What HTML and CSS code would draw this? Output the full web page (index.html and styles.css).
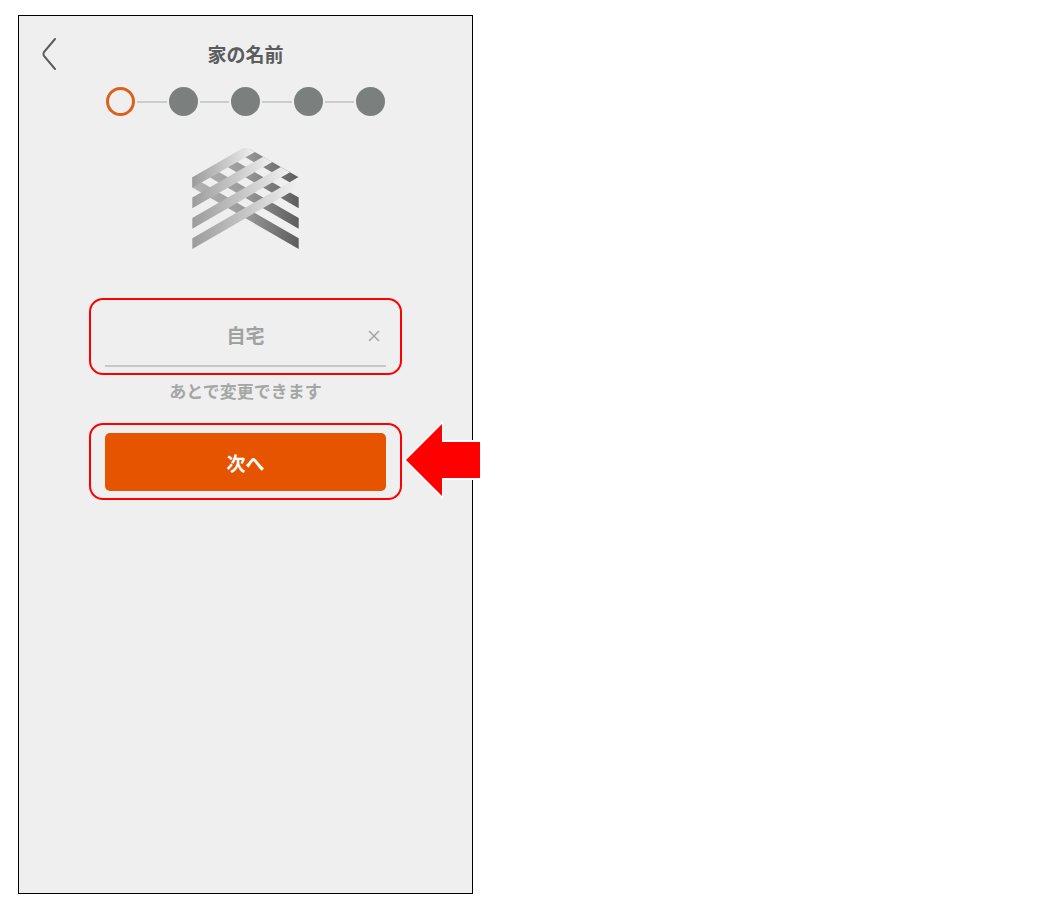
FILE: index.html
```html
<!DOCTYPE html>
<html lang="ja">
  <head>
    <meta charset="UTF-8" />
    <meta name="viewport" content="width=device-width, initial-scale=1.0" />
    <title>家の名前</title>
    <link rel="stylesheet" href="styles.css">
  </head>
  <body>
    <main class="phone">
      <header class="header">
        <button class="back" type="button" aria-label="戻る">
          <svg width="16" height="34" viewBox="0 0 16 34">
            <path d="M13 2 L2 15 Q1 17 2 19 L13 32" fill="none" stroke="#5a5c5d" stroke-width="2" stroke-linecap="round" />
          </svg>
        </button>
        <h1>家の名前</h1>
      </header>

      <ol class="steps">
        <li class="step current"></li>
        <li class="step"></li>
        <li class="step"></li>
        <li class="step"></li>
        <li class="step"></li>
      </ol>

      <svg class="logo" viewBox="0 0 320 304" aria-hidden="true">
        <defs>
          <linearGradient id="dark" gradientUnits="userSpaceOnUse" x1="0" y1="0" x2="320" y2="0">
            <stop offset="0" stop-color="#b4b4b4" />
            <stop offset="0.5" stop-color="#999999" />
            <stop offset="1" stop-color="#5c5c5c" />
          </linearGradient>
          <linearGradient id="light">
            <stop offset="0" stop-color="#9c9c9c" />
            <stop offset="0.55" stop-color="#cacaca" />
            <stop offset="1" stop-color="#f1f1f1" />
          </linearGradient>
        </defs>
        <!-- bands going down to the right -->
        <g fill="url(#dark)">
          <path d="M146 20 L174 4 L320 88 L294 104 Z" />
          <path d="M93 50 L121 34 L320 149 L320 181 Z" />
          <path d="M40 81 L67 65 L320 211 L320 243 Z" />
          <path d="M0 119 L0 87 L320 272 L320 304 Z" />
        </g>
        <!-- bands going up to the right, on top -->
        <g fill="url(#light)">
          <path d="M0 88 L160 -4 L188 12 L0 120 Z" />
          <path d="M0 149 L213 26 L241 42 L0 181 Z" />
          <path d="M0 211 L266 57 L294 73 L0 243 Z" />
          <path d="M0 272 L320 87 L320 119 L0 304 Z" />
        </g>
      </svg>

      <form class="name-form">
        <div class="highlight">
          <div class="field">
            <input type="text" name="home-name" value="自宅" aria-label="家の名前" />
            <button class="clear" type="button" aria-label="消去">
              <svg width="12" height="12" viewBox="0 0 12 12">
                <path d="M1 1 L11 11 M11 1 L1 11" stroke="#a5a6a6" stroke-width="1.6" />
              </svg>
            </button>
          </div>
        </div>
        <p class="note">あとで変更できます</p>
        <div class="highlight">
          <button class="next" type="submit">次へ</button>
          <svg class="arrow" width="78" height="78" viewBox="0 0 78 78" aria-hidden="true">
            <path d="M77 18 L40 18 L40 -1 L1 38 L40 77 L40 58 L77 58 Z" fill="#fff" />
            <path d="M77 20 L39 20 L39 2 L3 38 L39 74 L39 56 L77 56 Z" fill="#f00" />
          </svg>
        </div>
      </form>
    </main>
  </body>
</html>
```

FILE: styles.css
```css
*,
*::before,
*::after {
  box-sizing: border-box;
}

body {
  margin: 0;
  padding: 15px 18px 12px;
  background-color: #fff;
  font-family: "Noto Sans CJK JP", sans-serif;
  font-weight: bold;
}

button {
  border: none;
  background: none;
  padding: 0;
  font: inherit;
  cursor: pointer;
}

svg {
  display: block;
}

.phone {
  display: flex;
  flex-direction: column;
  align-items: center;
  width: 100%;
  max-width: 455px;
  aspect-ratio: 455 / 879;
  border: 1px solid #000;
  background-color: #efefef;
}

.header {
  display: grid;
  grid-template-columns: 40px 1fr 40px;
  align-items: center;
  width: 100%;
  padding: 20px 23px 0;
}

.header h1 {
  margin: 0;
  font-size: 19px;
  line-height: 36px;
  text-align: center;
  color: #5a5c5d;
}

.steps {
  display: flex;
  justify-content: space-between;
  width: 279px;
  margin: 15px 0 0;
  padding: 0;
  list-style: none;
}

.step {
  display: flex;
  align-items: center;
}

.step::before {
  content: '';
  width: 29px;
  height: 29px;
  border-radius: 50%;
  background-color: #7b7f7e;
}

.step:not(:last-child) {
  flex: 1;
}

/* line to the next step */
.step:not(:last-child)::after {
  content: '';
  flex: 1;
  height: 2px;
  margin: 0 2px;
  background-color: #cccccc;
}

.step.current::before {
  border: 3px solid #dc601c;
  background-color: transparent;
}

.logo {
  width: 107px;
  height: 101px;
  margin-top: 32px;
}

.name-form {
  width: 313px;
  margin-top: 49px;
}

.highlight {
  position: relative;
  height: 77px;
  padding: 8px 14px;
  border: 2px solid #f00;
  border-radius: 14px;
}

.field {
  position: relative;
}

.field input {
  width: 100%;
  height: 59px;
  border: none;
  border-bottom: 2px solid #c8c8c8;
  background: none;
  padding: 0 32px 4px;
  font: inherit;
  font-size: 19px;
  text-align: center;
  color: #a0a1a1;
  outline: none;
}

.clear {
  position: absolute;
  top: 22px;
  right: 6px;
}

.note {
  margin: 0;
  font-size: 17px;
  line-height: 32px;
  padding-bottom: 16px;
  text-align: center;
  color: #a5a6a6;
}

.next {
  display: block;
  width: 100%;
  height: 58px;
  border-radius: 5px;
  background-color: #e65400;
  font-size: 19px;
  color: #fff;
}

.arrow {
  position: absolute;
  top: -3px;
  left: calc(100% + 3px);
}
```
